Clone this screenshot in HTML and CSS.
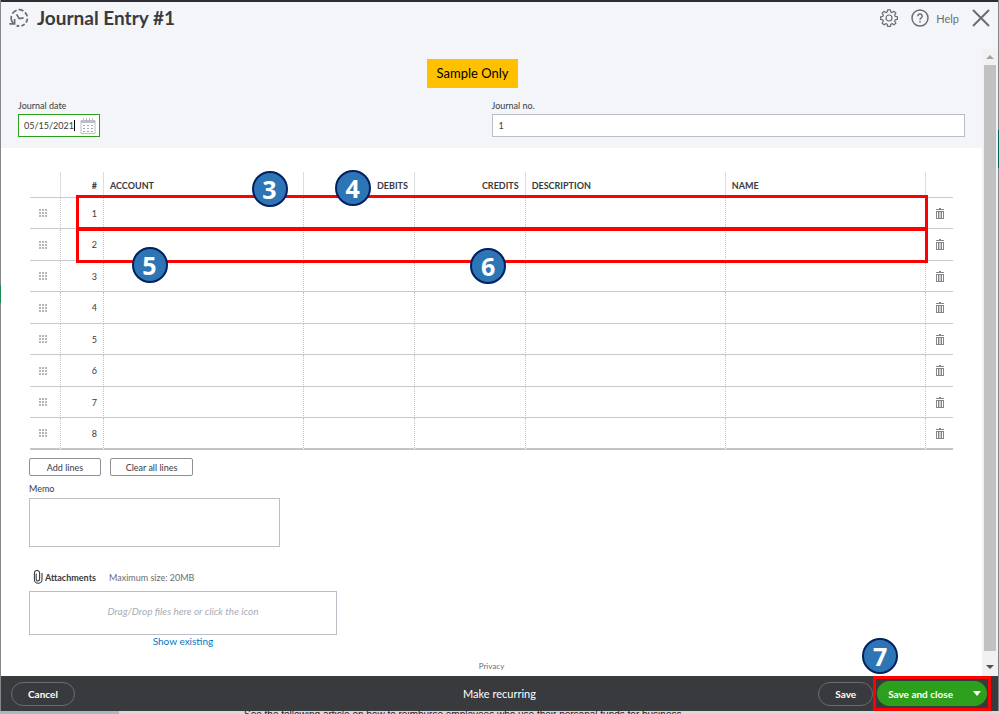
FILE: index.html
```html
<!doctype html>
<html lang="en">

<head>
  <meta charset="utf-8">
  <meta name="viewport" content="width=device-width, initial-scale=1">
  <title>Journal Entry #1</title>
  <link rel="stylesheet" href="styles.css">
</head>

<body>
  <svg class="sprite" width="0" height="0" aria-hidden="true">
    <symbol id="grip" viewBox="0 0 8 8">
      <path d="M0 0h2v2H0zM3 0h2v2H3zM6 0h2v2H6zM0 3h2v2H0zM3 3h2v2H3zM6 3h2v2H6zM0 6h2v2H0zM3 6h2v2H3zM6 6h2v2H6z" />
    </symbol>
    <symbol id="trash" viewBox="0 0 8 11">
      <path d="M3 0h2v1h3v1H0V1h3zM0 3h8v8H0zM1 4v6h1V4zM3 4v6h0.6V4zM4.4 4v6H5V4zM6 4v6h1V4z" fill-rule="evenodd" />
    </symbol>
  </svg>

  <div class="window">
    <header class="header">
      <button class="icon-btn" aria-label="Recent entries">
        <svg width="20" height="20" viewBox="0 0 20 20" fill="none" stroke="#6b6c72" stroke-width="1.7">
          <path d="M4.6 15.6A8 8 0 0 1 2.4 8" />
          <path d="M3.4 5.6A8 8 0 0 1 7.6 2.2" />
          <path d="M9.6 1.7A8 8 0 0 1 14.4 3M16 4.4A8 8 0 0 1 18.2 8.4M18.4 10.6A8 8 0 0 1 17 14.6M15.6 16.2A8 8 0 0 1 12.4 17.9M10.2 18.2A8 8 0 0 1 7.6 17.6" />
          <path d="M.4 15.8h5.2V11M7.6 6.4l2.6 4.2 4.4-.8" />
        </svg>
      </button>
      <h1>Journal Entry #1</h1>
      <div class="header-tools">
        <button class="icon-btn" aria-label="Settings">
          <svg width="18" height="18" viewBox="0 0 18 18" fill="none" stroke="#6b6c72" stroke-width="1.2" stroke-linejoin="round">
            <path d="M7.6 .8h2.8l.4 2.2 1.3.6 1.9-1.3 1.9 1.9-1.3 1.9.6 1.3 2.2.4v2.6l-2.2.4-.6 1.3 1.3 1.9-1.9 1.9-1.9-1.3-1.3.6-.4 2.2H7.6l-.4-2.2-1.3-.6L4 15.9 2.1 14l1.3-1.9-.6-1.3-2.2-.4V7.8l2.2-.4.6-1.3L2.1 4.2 4 2.3l1.9 1.3L7.2 3z" />
            <circle cx="9" cy="9" r="3" />
          </svg>
        </button>
        <button class="icon-btn help">
          <svg width="18" height="18" viewBox="0 0 18 18" fill="none" stroke="#6b6c72" stroke-width="1.5">
            <circle cx="9" cy="9" r="8" />
            <path d="M6.8 7.2a2.2 2.2 0 1 1 3.2 1.9c-.7.4-1 .7-1 1.6M9 12v1.4" />
          </svg>
          Help
        </button>
        <button class="icon-btn" aria-label="Close">
          <svg width="18" height="18" viewBox="0 0 18 18" fill="none" stroke="#6b6c72" stroke-width="2">
            <path d="M1 1l16 16M17 1L1 17" />
          </svg>
        </button>
      </div>
    </header>

    <div class="body">
      <main class="content">
        <section class="entry-head">
          <div class="sample">Sample Only</div>
          <div class="fields">
            <div class="field">
              <label for="journal-date">Journal date</label>
              <div class="date-box">
                <input id="journal-date" type="text" value="05/15/2021">
                <span class="caret"></span>
                <svg width="16" height="18" viewBox="0 0 16 18" fill="none" stroke="#babec5">
                  <path d="M1 3.5h14v13H1z" />
                  <path d="M1 4.5h14" stroke-width="3" />
                  <path d="M3.5 1v3M6.5 1v3M9.5 1v3M12.5 1v3" />
                  <path d="M3 8.5h10M3 11.5h10M3 14.5h10" stroke="#a2a5ab" stroke-dasharray="2 2" />
                </svg>
              </div>
            </div>
            <div class="field">
              <label for="journal-no">Journal no.</label>
              <input id="journal-no" class="text-box" type="text" value="1">
            </div>
          </div>
        </section>

        <section class="lines">
          <table>
            <colgroup>
              <col class="col-grip">
              <col class="col-num">
              <col>
              <col class="col-amount">
              <col class="col-amount">
              <col>
              <col>
              <col class="col-trash">
            </colgroup>
            <thead>
              <tr>
                <th></th>
                <th class="right">#</th>
                <th>ACCOUNT</th>
                <th class="right">DEBITS</th>
                <th class="right">CREDITS</th>
                <th>DESCRIPTION</th>
                <th>NAME</th>
                <th></th>
              </tr>
            </thead>
            <tbody>
              <tr>
                <td><svg class="grip"><use href="#grip" /></svg></td>
                <td class="right">1</td>
                <td></td><td></td><td></td><td></td><td></td>
                <td><button class="trash" aria-label="Delete line 1"><svg><use href="#trash" /></svg></button></td>
              </tr>
              <tr>
                <td><svg class="grip"><use href="#grip" /></svg></td>
                <td class="right">2</td>
                <td></td><td></td><td></td><td></td><td></td>
                <td><button class="trash" aria-label="Delete line 2"><svg><use href="#trash" /></svg></button></td>
              </tr>
              <tr>
                <td><svg class="grip"><use href="#grip" /></svg></td>
                <td class="right">3</td>
                <td></td><td></td><td></td><td></td><td></td>
                <td><button class="trash" aria-label="Delete line 3"><svg><use href="#trash" /></svg></button></td>
              </tr>
              <tr>
                <td><svg class="grip"><use href="#grip" /></svg></td>
                <td class="right">4</td>
                <td></td><td></td><td></td><td></td><td></td>
                <td><button class="trash" aria-label="Delete line 4"><svg><use href="#trash" /></svg></button></td>
              </tr>
              <tr>
                <td><svg class="grip"><use href="#grip" /></svg></td>
                <td class="right">5</td>
                <td></td><td></td><td></td><td></td><td></td>
                <td><button class="trash" aria-label="Delete line 5"><svg><use href="#trash" /></svg></button></td>
              </tr>
              <tr>
                <td><svg class="grip"><use href="#grip" /></svg></td>
                <td class="right">6</td>
                <td></td><td></td><td></td><td></td><td></td>
                <td><button class="trash" aria-label="Delete line 6"><svg><use href="#trash" /></svg></button></td>
              </tr>
              <tr>
                <td><svg class="grip"><use href="#grip" /></svg></td>
                <td class="right">7</td>
                <td></td><td></td><td></td><td></td><td></td>
                <td><button class="trash" aria-label="Delete line 7"><svg><use href="#trash" /></svg></button></td>
              </tr>
              <tr>
                <td><svg class="grip"><use href="#grip" /></svg></td>
                <td class="right">8</td>
                <td></td><td></td><td></td><td></td><td></td>
                <td><button class="trash" aria-label="Delete line 8"><svg><use href="#trash" /></svg></button></td>
              </tr>
            </tbody>
          </table>
          <div class="highlight highlight-first"></div>
          <div class="highlight highlight-second"></div>
          <span class="step step-3">3</span>
          <span class="step step-4">4</span>
          <span class="step step-5">5</span>
          <span class="step step-6">6</span>
        </section>

        <section class="extras">
          <div class="line-actions">
            <button class="btn-small add-lines">Add lines</button>
            <button class="btn-small clear-lines">Clear all lines</button>
          </div>
          <label for="memo">Memo</label>
          <textarea id="memo"></textarea>

          <div class="attach-head">
            <svg width="10" height="14" viewBox="0 0 10 14" fill="none" stroke="#393a3d" stroke-width="1.1">
              <path d="M3.2 3.5v5.8a1.6 1.6 0 0 0 3.4 0V3.2a2.5 2.5 0 0 0-5.2-.2v6.5a3.8 3.8 0 0 0 7.6 0V3" />
            </svg>
            <strong>Attachments</strong>
            <span>Maximum size: 20MB</span>
          </div>
          <button class="drop-zone">Drag/Drop files here or click the icon</button>
          <a class="show-existing" href="#">Show existing</a>
        </section>

        <a class="privacy" href="#">Privacy</a>
      </main>

      <div class="scrollbar" aria-hidden="true">
        <span class="arrow arrow-up"></span>
        <span class="thumb"></span>
        <span class="arrow arrow-down"></span>
      </div>
    </div>

    <footer class="footer">
      <div class="footer-left">
        <button class="btn-pill">Cancel</button>
      </div>
      <button class="btn-text">Make recurring</button>
      <div class="footer-right">
        <button class="btn-pill">Save</button>
        <div class="save-group">
          <div class="save-close">
            <button>Save and close</button>
            <button class="save-menu" aria-label="More save options"></button>
          </div>
          <span class="step step-7">7</span>
        </div>
      </div>
    </footer>
  </div>

  <div class="behind">
    <p>See the following article on how to reimburse employees who use their personal funds for business.</p>
  </div>
</body>

</html>
```

FILE: styles.css
```css
* {
  box-sizing: border-box;
}

body {
  margin: 0;
  height: 100vh;
  display: flex;
  flex-direction: column;
  overflow: hidden;
  /* green bits of the page below show at both edges */
  background:
    linear-gradient(#1d8a5a, #1d8a5a) left 0 top 285px / 1px 18px no-repeat,
    linear-gradient(#00695c, #00695c) right 0 top 130px / 1px 38px no-repeat,
    #85868a;
  color: #393a3d;
  font-family: Lato, "Open Sans", sans-serif;
  font-size: 10px;
}

button,
input,
textarea {
  font-family: inherit;
  font-size: inherit;
  color: inherit;
}

button {
  padding: 0;
  border: none;
  background: none;
  cursor: pointer;
}

.sprite {
  position: absolute;
}

.window {
  flex: 1;
  min-height: 0;
  display: flex;
  flex-direction: column;
  margin: 0 1px;
  border-top: 2px solid #2d2e33;
  background: #fff;
}

/* header */
.header {
  display: flex;
  align-items: center;
  height: 47px;
  padding: 0 8px 15px 8px;
  background: #f4f5f8;
}

.header h1 {
  margin: 0 0 0 8px;
  font-size: 19px;
  line-height: 24px;
}

.header-tools {
  display: flex;
  align-items: center;
  gap: 13px;
  margin-left: auto;
}

.icon-btn {
  display: flex;
  align-items: center;
  color: #6b6c72;
}

.help {
  gap: 7px;
  font-size: 11px;
}

.body {
  flex: 1;
  min-height: 0;
  display: flex;
}

.content {
  flex: 1;
  min-width: 0;
  display: flex;
  flex-direction: column;
}

.entry-head {
  padding: 10px 17px 11px;
  background: #f4f5f8;
}

.sample {
  width: 91px;
  margin-left: 43.2%;
  background: #ffc000;
  color: #000;
  font-size: 13px;
  line-height: 29px;
  text-align: center;
  white-space: nowrap;
}

.fields {
  display: grid;
  grid-template-columns: 1fr 1fr;
  margin-top: 12px;
}

.field label,
.extras label {
  display: block;
  font-size: 9px;
  line-height: 12px;
}

.field label {
  margin-bottom: 2px;
}

.date-box {
  display: flex;
  align-items: center;
  width: 82px;
  height: 23px;
  padding: 0 3px 0 5px;
  border: 1px solid #2ca01c;
  background: #fff;
}

.date-box input {
  flex: 1;
  min-width: 0;
  padding: 0;
  border: none;
  outline: none;
  background: none;
  font-size: 9px;
}

.caret {
  width: 1px;
  height: 11px;
  margin-right: 5px;
  background: #000;
}

.text-box {
  display: block;
  width: 100%;
  height: 23px;
  padding: 0 6px;
  border: 1px solid #babec5;
  font-size: 9px;
}

/* journal lines */
.lines {
  position: relative;
  margin: 24px 29px 0 29px;
}

table {
  width: 100%;
  table-layout: fixed;
  border-collapse: separate;
  border-spacing: 0;
}

.col-grip {
  width: 31px;
}

.col-num {
  width: 43px;
}

.col-amount {
  width: 12%;
}

.col-trash {
  width: 27px;
}

th,
td {
  padding: 0 6px;
  border-right: 1px dotted #c4c4c4;
  border-bottom: 1px solid #c9cacf;
  text-align: left;
  vertical-align: middle;
}

th {
  height: 26px;
  padding-top: 2px;
  border-right: 1px solid #dcdde3;
  font-size: 9px;
}

td {
  height: 31px;
  font-size: 9px;
}

tr:nth-child(even) td {
  height: 32px;
}

th:last-child,
td:last-child {
  border-right: none;
}

tbody tr:last-child td {
  border-bottom: 2px solid #c4c4c4;
}

.right {
  text-align: right;
}

.grip {
  display: block;
  width: 8px;
  height: 8px;
  margin-left: 3px;
  fill: #b4b6ba;
}

.trash {
  display: block;
  margin: 0 auto;
}

.trash svg {
  display: block;
  width: 8px;
  height: 11px;
  fill: #85868b;
}

/* the two boxes overlap by a pixel where they meet */
.highlight {
  position: absolute;
  left: 46px;
  right: 25px;
  height: 35px;
  border: 3px solid #f00;
  pointer-events: none;
}

.highlight-first {
  top: 23px;
}

.highlight-second {
  top: 56px;
}

.step {
  position: absolute;
  width: 36px;
  height: 36px;
  border: 2px solid #002060;
  border-radius: 50%;
  background: #2e75b6;
  color: #fff;
  font-family: "Open Sans", sans-serif;
  font-size: 25px;
  font-weight: bold;
  line-height: 32px;
  text-align: center;
}

.step-3 {
  top: -1px;
  left: 24%;
}

.step-4 {
  top: -2px;
  left: 33%;
}

.step-5 {
  top: 75px;
  left: 11%;
}

.step-6 {
  top: 76px;
  left: calc(48% - 3px);
}

/* memo and attachments */
.extras {
  display: flex;
  flex-direction: column;
  align-items: flex-start;
  padding: 8px 29px 0 28px;
}

.line-actions {
  display: flex;
  gap: 9px;
  margin-bottom: 7px;
}

.btn-small {
  height: 18px;
  border: 1px solid #8d9096;
  border-radius: 2px;
  background: #fff;
  font-size: 9px;
}

.add-lines {
  width: 72px;
}

.clear-lines {
  width: 83px;
}

textarea {
  width: 251px;
  height: 49px;
  margin-top: 3px;
  border: 1px solid #babec5;
  resize: none;
}

.attach-head {
  display: flex;
  align-items: center;
  height: 14px;
  margin: 23px 0 7px 4px;
  font-size: 9px;
}

.attach-head strong {
  margin: 0 13px 0 2px;
}

.attach-head span {
  color: #6b6c72;
}

.drop-zone {
  width: 308px;
  height: 44px;
  padding-bottom: 4px;
  border: 1px solid #babec5;
  color: #a9acb3;
  font-style: italic;
}

.show-existing {
  width: 308px;
  color: #0077c5;
  line-height: 12px;
  text-align: center;
  text-decoration: none;
}

.privacy {
  margin: auto auto 4px;
  color: #6b6c72;
  font-size: 8px;
  line-height: 12px;
  text-decoration: none;
}

/* scrollbar */
.scrollbar {
  display: flex;
  flex-direction: column;
  align-items: center;
  width: 16px;
  background: #f1f1f1;
}

.thumb {
  flex: 1;
  width: 12px;
  margin: 6px 0 14px;
  background: #c1c1c1;
}

.arrow {
  border: 4px solid transparent;
}

.arrow-up {
  margin-top: 6px;
  border-top: none;
  border-bottom: 4px solid #a3a3a3;
}

.arrow-down {
  margin-bottom: 7px;
  border-bottom: none;
  border-top: 4px solid #505050;
}

/* footer */
.footer {
  display: grid;
  grid-template-columns: 1fr auto 1fr;
  align-items: center;
  height: 35px;
  background: #393a3d;
  color: #fff;
}

.footer-left {
  padding-left: 10px;
}

.footer-right {
  display: flex;
  justify-content: flex-end;
  align-items: center;
  padding-right: 7px;
}

.btn-pill {
  height: 24px;
  padding: 0 16px;
  border: 1px solid #6b6c72;
  border-radius: 12px;
  font-weight: bold;
}

.btn-text {
  font-size: 11px;
}

.save-group {
  position: relative;
  padding: 2px 1px;
  border: 3px solid #f00;
}

.save-close {
  display: flex;
  align-items: center;
  height: 25px;
  padding: 0 6px 0 11px;
  border-radius: 13px;
  background: #2ca01c;
}

.save-close button {
  font-weight: bold;
}

.save-menu {
  width: 0;
  height: 0;
  margin-left: 20px;
  border: 4px solid transparent;
  border-top: 5px solid #fff;
  border-bottom: none;
}

.step-7 {
  top: -41px;
  left: -14px;
}

/* page under the window */
.behind {
  height: 3px;
  padding-left: 244px;
  overflow: hidden;
  background: linear-gradient(to right, #a9b8bb 119px, #d9d9d9 119px);
}

.behind p {
  margin: -2px 0 0;
  color: #222;
  font-family: "Liberation Sans", Arial, sans-serif;
  font-size: 10px;
  line-height: 12px;
  white-space: nowrap;
}
```
